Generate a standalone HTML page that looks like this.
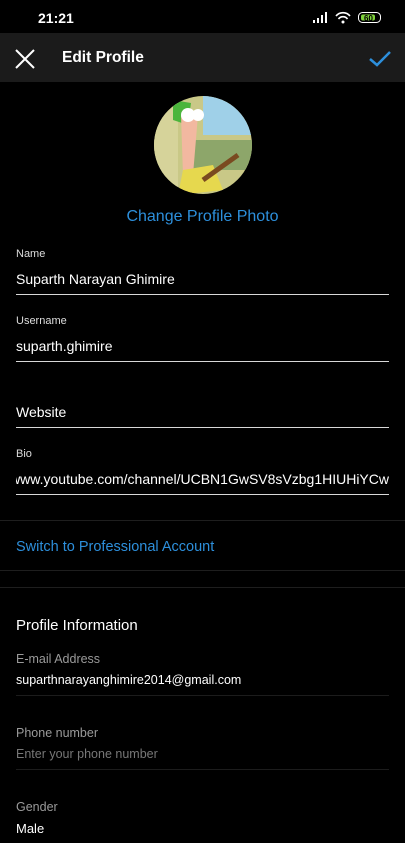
<html><head><style>
body{margin:0;width:405px;height:843px;background:#000;overflow:hidden;font-family:"Liberation Sans",sans-serif;color:#fff;position:relative}
.a{position:absolute;white-space:nowrap}
.l{position:absolute;left:16px;width:373px;height:1px;background:#d8d8d8}
.f{position:absolute;left:0;width:405px;height:1px;background:#1e1e1e}
.g{position:absolute;left:16px;width:373px;height:1px;background:#1c1c1c}
.lab{font-size:11px;color:#ddd}
.val{font-size:14px}
.gl{font-size:12.5px;color:#9a9a9a}
</style></head><body>
<div class="a" style="left:38px;top:10px;font-size:14px;font-weight:bold">21:21</div>
<svg class="a" style="left:313px;top:11px" width="72" height="14">
<rect x="0" y="9" width="2" height="3" fill="#fff"/><rect x="4" y="7" width="2" height="5" fill="#fff"/><rect x="8" y="4" width="2" height="8" fill="#fff"/><rect x="12" y="1" width="2" height="11" fill="#fff"/>
<path d="M23 5 A9 9 0 0 1 37 5 M25.5 8 A5.5 5.5 0 0 1 34.5 8" stroke="#fff" stroke-width="1.6" fill="none"/><circle cx="30" cy="11" r="1.5" fill="#fff"/>
<rect x="45.5" y="1.5" width="22" height="10" rx="4" stroke="#fff" fill="none"/><rect x="48" y="3.5" width="14" height="6" rx="2" fill="#7fd13b"/><text x="51" y="10" font-size="8" font-weight="bold" fill="#000" font-family="Liberation Sans">60</text></svg>
<div class="a" style="left:0;top:33px;width:405px;height:49px;background:#1b1b1b"></div>
<svg class="a" style="left:14px;top:48px" width="22" height="22"><path d="M2 2L20 20M20 2L2 20" stroke="#fff" stroke-width="2"/></svg>
<div class="a" style="left:62px;top:49px;font-size:15.5px;font-weight:bold">Edit Profile</div>
<svg class="a" style="left:368px;top:49px" width="24" height="20"><path d="M2 10L9 16L22 3" stroke="#2d8fdb" stroke-width="2.5" fill="none"/></svg>
<svg class="a" style="left:153px;top:95px" width="100" height="100"><defs><clipPath id="c"><circle cx="50" cy="50" r="49"/></clipPath></defs><g clip-path="url(#c)"><rect width="100" height="100" fill="#c9c887"/><rect x="50" y="0" width="50" height="40" fill="#9fd0e8"/><rect x="40" y="45" width="60" height="30" fill="#8da66a"/><rect x="0" y="0" width="25" height="100" fill="#d6d39a"/><path d="M20 5L38 8L35 30L20 25Z" fill="#4bb53c"/><path d="M28 20L45 20L40 80L30 80Z" fill="#f2b8a0"/><circle cx="35" cy="20" r="7" fill="#fff"/><circle cx="45" cy="20" r="6" fill="#fff"/><path d="M30 75L60 70L70 95L25 100Z" fill="#e6d84e"/><path d="M50 85L85 60" stroke="#7a4a20" stroke-width="5"/></g></svg>
<div class="a" style="left:0;width:405px;text-align:center;top:208px;font-size:16px;color:#2d8fdb">Change Profile Photo</div>
<div class="a lab" style="left:16px;top:248px">Name</div>
<div class="a val" style="left:16px;top:271px">Suparth Narayan Ghimire</div><div class="l" style="top:294px"></div>
<div class="a lab" style="left:16px;top:315px">Username</div>
<div class="a val" style="left:16px;top:338px">suparth.ghimire</div><div class="l" style="top:361px"></div>
<div class="a val" style="left:16px;top:404px">Website</div><div class="l" style="top:427px"></div>
<div class="a lab" style="left:16px;top:448px">Bio</div>
<div style="position:absolute;left:16px;top:471px;width:373px;height:20px;overflow:hidden;font-size:14px;white-space:nowrap"><span style="position:absolute;right:0;top:0">www.youtube.com/channel/UCBN1GwSV8sVzbg1HIUHiYCw</span></div><div class="l" style="top:494px"></div>
<div class="f" style="top:520px"></div>
<div class="a" style="left:16px;top:539px;font-size:14.5px;color:#2d8fdb">Switch to Professional Account</div>
<div class="f" style="top:570px"></div><div class="f" style="top:587px"></div>
<div class="a" style="left:16px;top:617px;font-size:15px">Profile Information</div>
<div class="a gl" style="left:16px;top:652px">E-mail Address</div>
<div class="a" style="left:16px;top:673px;font-size:12.5px">suparthnarayanghimire2014@gmail.com</div><div class="g" style="top:695px"></div>
<div class="a gl" style="left:16px;top:726px">Phone number</div>
<div class="a" style="left:16px;top:747px;font-size:12.5px;color:#777">Enter your phone number</div><div class="g" style="top:769px"></div>
<div class="a gl" style="left:16px;top:800px">Gender</div>
<div class="a" style="left:16px;top:821px;font-size:13px">Male</div>
</body></html>
